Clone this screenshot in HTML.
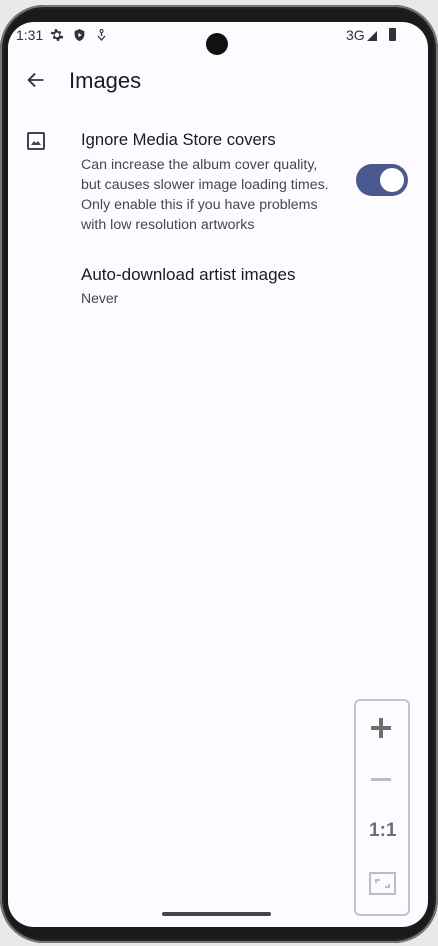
<!DOCTYPE html>
<html><head><style>
body{margin:0;width:438px;height:946px;background:#e9e9e9;position:relative;overflow:hidden;font-family:"Liberation Sans",sans-serif;}
.frame{position:absolute;left:0;top:5px;width:438px;height:938px;background:#1a1a1a;border-radius:44px;box-shadow:inset 0 0 0 2px #777,inset 0 0 0 4px #222;}
.screen{position:absolute;left:8px;top:22px;width:420px;height:905px;background:#fdfbff;border-radius:26px;overflow:hidden;}
.t{position:absolute;white-space:nowrap;}
</style></head><body>
<div class="frame"></div>
<div class="screen">
  <div class="t" style="left:8px;top:5px;font-size:14px;color:#333">1:31</div>
  <svg class="t" style="left:42px;top:6px" width="14" height="14" viewBox="0 0 24 24"><path fill="#333" d="M12 8a4 4 0 1 0 0 8 4 4 0 0 0 0-8zm8.9 5.5l2.1 1.6-2 3.5-2.5-1a8 8 0 0 1-2.3 1.3L15.8 22h-4l-.4-2.6a8 8 0 0 1-2.3-1.3l-2.5 1-2-3.5 2.1-1.6a8 8 0 0 1 0-2.6L1 9.8l2-3.5 2.5 1a8 8 0 0 1 2.3-1.3L8.2 2h4l.4 2.6a8 8 0 0 1 2.3 1.3l2.5-1 2 3.5-2.1 1.6a8 8 0 0 1 0 2.6z"/></svg>
  <svg class="t" style="left:65px;top:6px" width="13" height="14" viewBox="0 0 24 24"><path fill="#333" d="M12 1L3 5v6c0 5.5 3.8 10.7 9 12 5.2-1.3 9-6.5 9-12V5z"/><path fill="#fff" d="M10 8v8l6-4z"/></svg>
  <svg class="t" style="left:89px;top:7px" width="9" height="12" viewBox="0 0 9 12"><circle cx="4.5" cy="2" r="1.5" fill="none" stroke="#333"/><path d="M4.5 4v3M1 7l3.5 4L8 7" fill="none" stroke="#333" stroke-width="1.3"/></svg>
  <div class="t" style="left:338px;top:5px;font-size:14px;color:#333">3G</div>
  <svg class="t" style="left:359px;top:7px" width="12" height="12" viewBox="0 0 12 12"><path fill="#333" d="M0 12L10 2v10z"/></svg>
  <div class="t" style="left:381px;top:6px;width:7px;height:13px;background:#333;border-radius:1px"></div>
  <div class="t" style="left:198px;top:11px;width:22px;height:22px;border-radius:50%;background:#111"></div>
  <svg class="t" style="left:17px;top:47px" width="22" height="22" viewBox="0 0 24 24"><path d="M20 12H5M11 5l-7 7 7 7" stroke="#333" stroke-width="2" fill="none"/></svg>
  <div class="t" style="left:61px;top:46px;font-size:22px;color:#1b1b1f">Images</div>
  <div class="t" style="left:19px;top:110px;width:14px;height:14px;border:2px solid #444;border-radius:2px"></div>
  <svg class="t" style="left:23px;top:118px" width="10" height="5" viewBox="0 0 10 5"><path fill="#444" d="M0 5L3 1l2 2 2-2 3 4z"/></svg>
  <div class="t" style="left:73px;top:108px;font-size:16.6px;color:#1b1b1f">Ignore Media Store covers</div>
  <div class="t" style="left:73px;top:133px;font-size:14.2px;line-height:20px;color:#45464f">Can increase the album cover quality,<br>but causes slower image loading times.<br>Only enable this if you have problems<br>with low resolution artworks</div>
  <div class="t" style="left:348px;top:142px;width:52px;height:32px;border-radius:16px;background:#4a5a8f"></div>
  <div class="t" style="left:372px;top:146px;width:24px;height:24px;border-radius:50%;background:#fff"></div>
  <div class="t" style="left:73px;top:243px;font-size:17px;color:#1b1b1f">Auto-download artist images</div>
  <div class="t" style="left:73px;top:268px;font-size:14px;color:#45464f">Never</div>
  <div class="t" style="left:346px;top:677px;width:52px;height:213px;border:2px solid #c4c4c4;border-radius:6px;background:#fdfbff"></div>
  <div class="t" style="left:363px;top:704px;width:20px;height:4px;background:#6e6e6e"></div>
  <div class="t" style="left:371px;top:696px;width:4px;height:20px;background:#6e6e6e"></div>
  <div class="t" style="left:363px;top:756px;width:20px;height:3px;background:#bdbdbd"></div>
  <div class="t" style="left:361px;top:798px;font-size:19px;font-weight:bold;color:#6e6e6e">1:1</div>
  <div class="t" style="left:361px;top:850px;width:23px;height:19px;border:2px solid #bdbdbd"></div>
  <svg class="t" style="left:361px;top:850px" width="27" height="23" viewBox="0 0 27 23"><path d="M7 11V8h4M20 12v3h-4" stroke="#bdbdbd" stroke-width="2" fill="none"/></svg>
  <div class="t" style="left:154px;top:890px;width:109px;height:4px;border-radius:2px;background:#444"></div>
</div>
</body></html>
